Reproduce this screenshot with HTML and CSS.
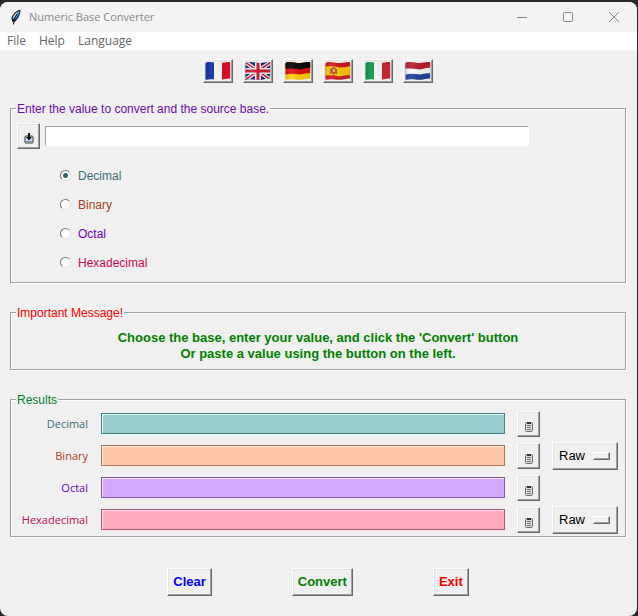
FILE: index.html
```html
<!DOCTYPE html>
<html lang="en">
<head>
<meta charset="utf-8">
<title>Numeric Base Converter</title>
<link rel="stylesheet" href="styles.css">
</head>
<body>
<svg class="defs" width="0" height="0" aria-hidden="true">
  <defs>
    <clipPath id="wave"><path d="M.5 2.500Q.5 1.200 3 1C8 .5 11 2.200 15 2C19 1.800 22 .8 25.200 1.200V17.500C22 17 18 18.800 14 18.800C10 18.800 6 17.500 .5 18.800Z"/></clipPath>
    <linearGradient id="shade"><stop offset="0" stop-color="#000" stop-opacity=".12"/><stop offset=".25" stop-color="#fff" stop-opacity=".08"/><stop offset=".6" stop-color="#000" stop-opacity=".05"/><stop offset="1" stop-color="#000" stop-opacity=".08"/></linearGradient>
    <symbol id="clipboard" viewBox="0 0 10 11">
      <rect x="1.500" y="1.500" width="7" height="9" rx="1" fill="#ddd" stroke="#75686c"/>
      <path d="M3 1h4v2H3z" fill="#333"/>
      <path d="M3 4.500h4M3 6.500h4M3 8.500h4" stroke="#777"/>
    </symbol>
  </defs>
</svg>
<div class="window">
  <header class="titlebar">
    <svg class="feather" width="12" height="16" viewBox="0 0 12 16" aria-hidden="true">
      <path d="M10.500.8C7 1 3 4.500 1.500 9L2 12.500L4.500 13C8.500 10 10.500 5 10.500.8Z" fill="#151515"/>
      <path d="M9.800 1.500C7 3 4.800 7 4 11.500C7.500 9 9.500 5 9.800 1.500Z" fill="#3d8ee6"/>
      <path d="M8.500 2C5 4 3 7 2.600 9.800L4 9.500Z" fill="#a9d0f5"/>
      <path d="M7 5Q3.500 10 3.500 15.500" fill="none" stroke="#111"/>
    </svg>
    <h1 class="title">Numeric Base Converter</h1>
    <div class="caption-buttons">
      <button type="button" aria-label="Minimize"><svg width="12" height="12" viewBox="0 0 12 12"><path d="M1 6.500h10"/></svg></button>
      <button type="button" aria-label="Maximize"><svg width="12" height="12" viewBox="0 0 12 12"><rect x="1.500" y="1.500" width="9" height="9" rx="1"/></svg></button>
      <button type="button" aria-label="Close"><svg width="12" height="12" viewBox="0 0 12 12"><path d="M1 1l10 10M11 1L1 11"/></svg></button>
    </div>
  </header>
  <nav class="menubar">
    <button type="button">File</button>
    <button type="button">Help</button>
    <button type="button">Language</button>
  </nav>
  <main>
    <div class="flags">
      <button type="button" class="raised flag" aria-label="Français"><svg viewBox="0 0 26 20"><g clip-path="url(#wave)"><path fill="#0b2fa0" d="M0 0h9v20H0z"/><path fill="#fafafa" d="M9 0h8v20H9z"/><path fill="#e0102c" d="M17 0h9v20h-9z"/><path fill="url(#shade)" d="M0 0h26v20H0z"/></g></svg></button>
      <button type="button" class="raised flag" aria-label="English"><svg viewBox="0 0 26 20"><g clip-path="url(#wave)"><path fill="#0d2c78" d="M0 0h26v20H0z"/><path stroke="#f2f2f2" stroke-width="4" d="M0 1l26 18M0 19L26 1"/><path stroke="#d11a38" stroke-width="1.500" d="M0 1l26 18M0 19L26 1"/><path stroke="#f2f2f2" stroke-width="6" d="M13 0v20M0 10h26"/><path stroke="#d11a38" stroke-width="3" d="M13 0v20M0 10h26"/><path fill="url(#shade)" d="M0 0h26v20H0z"/></g></svg></button>
      <button type="button" class="raised flag" aria-label="Deutsch"><svg viewBox="0 0 26 20"><g clip-path="url(#wave)"><path fill="#ffcd08" d="M0 0h26v20H0z"/><path fill="#df1010" d="M0 0h26v12Q20 12 15 13.500Q7 12 0 13.500z"/><path fill="#080808" d="M0 0h26v6.500Q20 7 15 8.500Q7 7 0 7.500z"/><path fill="url(#shade)" d="M0 0h26v20H0z"/></g></svg></button>
      <button type="button" class="raised flag" aria-label="Español"><svg viewBox="0 0 26 20"><g clip-path="url(#wave)"><path fill="#d01b20" d="M0 0h26v20H0z"/><path fill="#ffc80a" d="M0 5.500Q8 4.500 14 6.500Q20 6.500 26 5v9Q20 14 14 15.500Q8 13.500 0 14.500z"/><path fill="#b45a28" d="M6 7h5v5l-2.500 2L6 12z"/><path fill="#e7b870" d="M8 8h2v3H8z"/><path stroke="#8a6038" d="M5.500 8v5M11.500 8v5M7.500 6.500h2"/><path fill="url(#shade)" d="M0 0h26v20H0z"/></g></svg></button>
      <button type="button" class="raised flag" aria-label="Italiano"><svg viewBox="0 0 26 20"><g clip-path="url(#wave)"><path fill="#0d9447" d="M0 0h9v20H0z"/><path fill="#fafafa" d="M9 0h8v20H9z"/><path fill="#d32638" d="M17 0h9v20h-9z"/><path fill="url(#shade)" d="M0 0h26v20H0z"/></g></svg></button>
      <button type="button" class="raised flag" aria-label="Nederlands"><svg viewBox="0 0 26 20"><g clip-path="url(#wave)"><path fill="#20459b" d="M0 0h26v20H0z"/><path fill="#fafafa" d="M0 0h26v12Q20 12 15 13.500Q7 12 0 13.500z"/><path fill="#b8202f" d="M0 0h26v6.500Q20 7 15 8.500Q7 7 0 7.500z"/><path fill="url(#shade)" d="M0 0h26v20H0z"/></g></svg></button>
    </div>

    <fieldset class="group source">
      <legend>Enter the value to convert and the source base.</legend>
      <div class="entry">
        <button type="button" class="raised tool" aria-label="Paste"><svg width="10" height="11" viewBox="0 0 10 11"><rect x="1" y="3" width="8" height="7" rx="1" fill="#c9e0f2" stroke="#3c3636"/><path d="M2 8.500h6" stroke="#8097b8"/><path d="M4 0h2v4h2L5 7.500 2 4h2z" fill="#151515"/></svg></button>
        <input type="text" class="value" aria-label="Value to convert">
      </div>
      <div class="bases">
        <label class="decimal"><input type="radio" name="base" checked>Decimal</label>
        <label class="binary"><input type="radio" name="base">Binary</label>
        <label class="octal"><input type="radio" name="base">Octal</label>
        <label class="hexadecimal"><input type="radio" name="base">Hexadecimal</label>
      </div>
    </fieldset>

    <fieldset class="group message">
      <legend>Important Message!</legend>
      <p>Choose the base, enter your value, and click the 'Convert' button<br>Or paste a value using the button on the left.</p>
    </fieldset>

    <fieldset class="group results">
      <legend>Results</legend>
      <div class="row decimal">
        <label for="out-dec">Decimal</label><input id="out-dec" type="text" readonly>
        <button type="button" class="raised tool" aria-label="Copy decimal"><svg width="10" height="11"><use href="#clipboard"/></svg></button>
      </div>
      <div class="row binary">
        <label for="out-bin">Binary</label><input id="out-bin" type="text" readonly>
        <button type="button" class="raised tool" aria-label="Copy binary"><svg width="10" height="11"><use href="#clipboard"/></svg></button>
        <div class="option"><select class="raised" aria-label="Binary format"><option>Raw</option></select></div>
      </div>
      <div class="row octal">
        <label for="out-oct">Octal</label><input id="out-oct" type="text" readonly>
        <button type="button" class="raised tool" aria-label="Copy octal"><svg width="10" height="11"><use href="#clipboard"/></svg></button>
      </div>
      <div class="row hexadecimal">
        <label for="out-hex">Hexadecimal</label><input id="out-hex" type="text" readonly>
        <button type="button" class="raised tool" aria-label="Copy hexadecimal"><svg width="10" height="11"><use href="#clipboard"/></svg></button>
        <div class="option"><select class="raised" aria-label="Hexadecimal format"><option>Raw</option></select></div>
      </div>
    </fieldset>

    <div class="actions">
      <button type="button" class="raised clear">Clear</button>
      <button type="button" class="raised convert">Convert</button>
      <button type="button" class="raised exit">Exit</button>
    </div>
  </main>
</div>
</body>
</html>
```
FILE: styles.css
```css
* { box-sizing: border-box; }

body {
  margin: 0;
  padding: 2px 1px 0 0;
  background: #2b2727;
  font: 12px/16px "Liberation Sans", Arial, sans-serif;
}

button, input, select { font: inherit; margin: 0; }

.defs { position: absolute; }

.window {
  min-height: calc(100vh - 2px);
  background: #f0f0f0;
  border-radius: 8px;
  overflow: hidden;
}

.titlebar {
  display: flex;
  align-items: center;
  height: 30px;
  padding-left: 10px;
  background: #f3f3f3;
}

.title {
  flex: 1;
  margin: 0 0 0 7px;
  color: #8a8a8a;
  font: 11px/16px "Open Sans", "Noto Sans", sans-serif;
}

.caption-buttons { display: flex; }

.caption-buttons button {
  display: grid;
  place-items: center;
  width: 46px;
  height: 30px;
  padding: 0;
  border: 0;
  background: none;
}

.caption-buttons svg { fill: none; stroke: #888; }

.menubar {
  display: flex;
  gap: 13px;
  height: 18px;
  padding-left: 7px;
  background: #fff;
}

.menubar button {
  padding: 0;
  border: 0;
  background: none;
  color: #666;
  font: 12px/18px "Open Sans", "Noto Sans", sans-serif;
}

main { padding: 9px 11px 20px 10px; }

.raised {
  border: 1px solid;
  border-color: #fff #696969 #696969 #fff;
  border-radius: 0;
  background: #f0f0f0;
  box-shadow: inset -1px -1px #a0a0a0, inset 1px 1px #e3e3e3;
}

.flags {
  display: flex;
  justify-content: center;
  gap: 10px;
  margin-bottom: 17px;
}

.flag { width: 30px; height: 24px; padding: 1px; }
.flag svg { display: block; width: 26px; height: 20px; }

.group {
  min-width: 0;
  margin: 0 0 21px;
  padding: 0;
  border: 1px solid #a0a0a0;
  box-shadow: 1px 1px #fff, inset 1px 1px #fff;
}

.group legend {
  margin-left: 5px;
  padding: 1px 1px 0;
  background: #f0f0f0;
}

.source { padding: 6px 6px 5px; }
.source legend { margin-left: -1px; color: #6a0dad; }

.entry { display: flex; align-items: center; gap: 5px; }

.tool {
  display: grid;
  place-items: center;
  width: 23px;
  height: 26px;
  padding: 4px 0 0;
}

.value {
  flex: 1;
  min-width: 0;
  height: 20px;
  margin-right: 90px;
  padding: 1px 2px;
  border: 1px solid;
  border-color: #a0a0a0 #fff #fff #a0a0a0;
  background: #fff;
}

.bases { display: flex; flex-direction: column; margin: 12px 0 0 43px; }

.bases label {
  display: flex;
  align-items: center;
  align-self: flex-start;
  gap: 7px;
  height: 29px;
}

.bases input {
  width: 11px;
  height: 11px;
  border: 1px solid;
  border-color: #777 #e3e3e3 #e3e3e3 #777;
  border-radius: 50%;
  background: #fff;
  appearance: none;
}

.bases input:checked { background: radial-gradient(circle, #2f6264 2px, #fff 3px); }

.decimal { color: #3d6c6f; }
.binary { color: #a53e1e; }
.octal { color: #6a00c4; }
.hexadecimal { color: #cc0a44; }

.message { padding: 9px 0 7px; }
.message legend { color: #f00; }
.message p { margin: 0; color: #008000; font-size: 13px; font-weight: bold; text-align: center; }

.results { margin-bottom: 31px; padding: 0 7px 0 6px; }
.results legend { margin-left: -1px; color: #008030; }

.row {
  display: grid;
  grid-template-columns: 72px minmax(0, 1fr) 23px 66px;
  align-items: center;
  column-gap: 12px;
  height: 32px;
}

.row label {
  padding-right: 1px;
  font-family: "Open Sans", "Noto Sans", sans-serif;
  font-size: 11px;
  text-align: right;
}

.row input {
  width: 100%;
  height: 21px;
  margin-bottom: 1px;
  padding: 1px 4px;
  border: 1px solid;
}

.row.decimal input { background: #99cccc; border-color: #4f7d7d; box-shadow: inset 1px 1px #d5ffff, 0 1px #d5ffff; }
.row.binary input { background: #ffc5a8; border-color: #a6725a; box-shadow: inset 1px 1px #fff0e0, 0 1px #fff0e0; }
.row.octal input { background: #d2a8ff; border-color: #8059a6; box-shadow: inset 1px 1px #f5e5ff, 0 1px #f5e5ff; }
.row.hexadecimal input { background: #ffaabd; border-color: #a65a6d; box-shadow: inset 1px 1px #ffe5ee, 0 1px #ffe5ee; }

.option { position: relative; }

.option select {
  display: block;
  width: 100%;
  height: 28px;
  padding: 0 6px;
  color: #000;
  font-size: 13px;
  appearance: none;
}

.option::after {
  content: "";
  position: absolute;
  top: 10px;
  right: 8px;
  width: 15px;
  height: 6px;
  border: 1px solid;
  border-color: #fff #696969 #696969 #fff;
  box-shadow: inset -1px -1px #a0a0a0;
  pointer-events: none;
}

.actions { display: flex; justify-content: center; gap: 80px; }

.actions button {
  height: 28px;
  padding: 0 5px;
  font-size: 13px;
  font-weight: bold;
}

.clear { color: #00f; }
.convert { color: #008000; }
.exit { color: #f00; }
```
